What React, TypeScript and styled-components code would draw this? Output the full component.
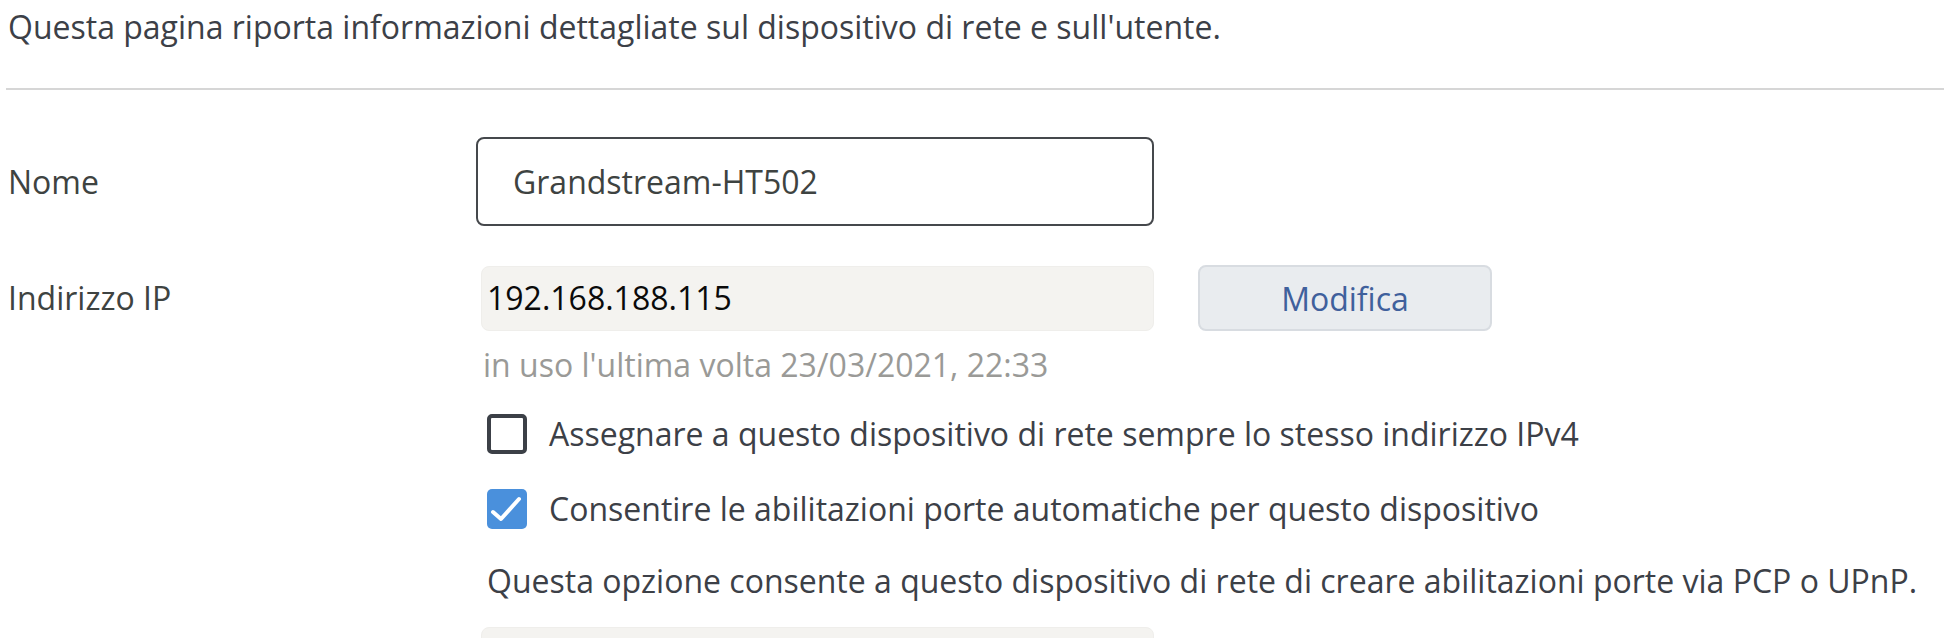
import React, { useState } from 'react';
import styled, { createGlobalStyle } from 'styled-components';

const colors = {
  text: '#3c4047',
  label: '#3e4341',
  muted: '#9a9a97',
  rule: '#d6d6d6',
  fieldBg: '#f4f3f0',
  buttonBg: '#e9ecef',
  buttonBorder: '#d8dce1',
  link: '#3f609c',
  blue: '#4a90dc',
};

const GlobalStyle = createGlobalStyle`
  body {
    margin: 0;
    background: #ffffff;
    font-family: "Open Sans", Lato, sans-serif;
    color: ${colors.text};
  }
`;

const Page = styled.div`
  width: 1944px;
  height: 638px;
  overflow: hidden;
  padding-left: 8px;
  box-sizing: border-box;
  font-size: 32px;
  line-height: 40px;
`;

const Intro = styled.p`
  margin: 0;
  padding-top: 7px;
`;

const Rule = styled.hr`
  margin: 41px 0 0 -2px;
  border: none;
  border-top: 2px solid ${colors.rule};
`;

const FieldRow = styled.div<{ $top: number }>`
  display: flex;
  align-items: center;
  margin-top: ${(p) => p.$top}px;
`;

const Label = styled.div`
  width: 468px;
  flex-shrink: 0;
  color: ${colors.label};
`;

const Details = styled.div`
  display: flex;
  flex-direction: column;
  align-items: flex-start;
  margin-left: 468px;
`;

const NameInput = styled.input`
  width: 678px;
  height: 89px;
  box-sizing: border-box;
  border: 2px solid #45484c;
  border-radius: 8px;
  padding: 0 0 0 35px;
  font-family: inherit;
  font-size: 32px;
  color: ${colors.label};
  background: #fff;
  outline: none;
`;

const IpGroup = styled.div`
  display: flex;
  align-items: center;
  gap: 44px;
  margin-left: 5px;
`;

const ReadField = styled.div`
  width: 673px;
  height: 65px;
  box-sizing: border-box;
  background: ${colors.fieldBg};
  border: 1px solid #efeeeb;
  border-radius: 8px;
  display: flex;
  align-items: center;
  padding-left: 5px;
  font-size: 32px;
  color: #0a0a0a;
`;

const EmptyField = styled(ReadField)`
  margin-top: 26px;
  margin-left: 5px;
`;

const Button = styled.button`
  width: 294px;
  height: 66px;
  box-sizing: border-box;
  background: ${colors.buttonBg};
  border: 2px solid ${colors.buttonBorder};
  border-radius: 8px;
  color: ${colors.link};
  font-family: inherit;
  font-size: 32px;
  cursor: pointer;
`;

const Hint = styled.div`
  margin: 14px 0 0 7px;
  color: ${colors.muted};
`;

const CheckRow = styled.label<{ $top: number }>`
  display: flex;
  align-items: center;
  gap: 22px;
  margin: ${(p) => p.$top}px 0 0 11px;
  cursor: pointer;
`;

const Box = styled.span<{ $checked: boolean }>`
  width: 40px;
  height: 40px;
  box-sizing: border-box;
  border-radius: 5px;
  border: ${(p) => (p.$checked ? 'none' : `4px solid ${colors.text}`)};
  background: ${(p) => (p.$checked ? colors.blue : '#fff')};
  display: flex;
  flex-shrink: 0;
`;

const Description = styled.div`
  margin: 32px 0 0 11px;
`;

function Check({ checked }: { checked: boolean }) {
  return (
    <Box $checked={checked}>
      {checked && (
        <svg width="40" height="40" viewBox="0 0 40 40">
          <path d="M6 23 L14 30 L32 10" fill="none" stroke="#fff" strokeWidth="4" strokeLinecap="round" strokeLinejoin="round" />
        </svg>
      )}
    </Box>
  );
}

export default function App(): JSX.Element {
  const [name, setName] = useState('Grandstream-HT502');
  const [sameIp, setSameIp] = useState(false);
  const [portFw, setPortFw] = useState(true);

  return (
    <Page>
      <GlobalStyle />
      <Intro>Questa pagina riporta informazioni dettagliate sul dispositivo di rete e sull'utente.</Intro>
      <Rule />
      <FieldRow $top={47}>
        <Label>Nome</Label>
        <NameInput value={name} onChange={(e) => setName(e.target.value)} />
      </FieldRow>
      <FieldRow $top={39}>
        <Label>Indirizzo IP</Label>
        <IpGroup>
          <ReadField>192.168.188.115</ReadField>
          <Button>Modifica</Button>
        </IpGroup>
      </FieldRow>
      <Details>
        <Hint>in uso l'ultima volta 23/03/2021, 22:33</Hint>
        <CheckRow $top={29} onClick={() => setSameIp(!sameIp)}>
          <Check checked={sameIp} />
          Assegnare a questo dispositivo di rete sempre lo stesso indirizzo IPv4
        </CheckRow>
        <CheckRow $top={35} onClick={() => setPortFw(!portFw)}>
          <Check checked={portFw} />
          Consentire le abilitazioni porte automatiche per questo dispositivo
        </CheckRow>
        <Description>Questa opzione consente a questo dispositivo di rete di creare abilitazioni porte via PCP o UPnP.</Description>
        <EmptyField />
      </Details>
    </Page>
  );
}
